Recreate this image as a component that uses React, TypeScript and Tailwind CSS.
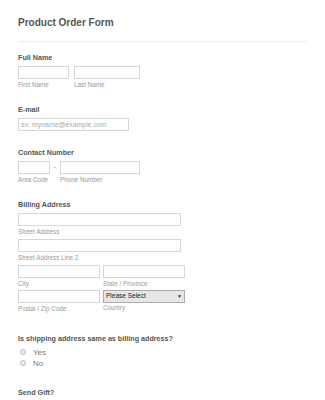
import React from 'react';

const font = { fontFamily: '"Liberation Sans", Arial, sans-serif' };

function Label({ children }: { children: React.ReactNode }) {
  return <div className="text-[7.2px] font-bold text-[#555] leading-[10px] mb-[3px]">{children}</div>;
}

function Sub({ children }: { children: React.ReactNode }) {
  return <div className="text-[6.3px] text-[#999] leading-[8px] mt-[2px]">{children}</div>;
}

function Box({ w }: { w: string }) {
  return <div className={`${w} h-[13px] border border-[#d7d7d7] bg-white`} />;
}

export default function App() {
  return (
    <div className="w-[325px] h-[400px] bg-white overflow-hidden" style={font}>
      <div className="px-[18px] pt-[16px]">
        <h1 className="text-[10px] font-bold text-[#555] leading-[13px]">Product Order Form</h1>
        <div className="mt-[12px] border-t border-[#ececec]" />

        {/* Full name */}
        <div className="mt-[11px]">
          <Label>Full Name</Label>
          <div className="flex gap-[5px]">
            <div><Box w="w-[51px]" /><Sub>First Name</Sub></div>
            <div><Box w="w-[66px]" /><Sub>Last Name</Sub></div>
          </div>
        </div>

        {/* Email */}
        <div className="mt-[16px]">
          <Label>E-mail</Label>
          <div className="w-[111px] h-[13px] border border-[#d7d7d7] text-[6.9px] text-[#aaa] leading-[11px] pl-[2px]">
            ex: myname@example.com
          </div>
        </div>

        {/* Contact */}
        <div className="mt-[17px]">
          <Label>Contact Number</Label>
          <div className="flex items-start">
            <div><Box w="w-[32px]" /><Sub>Area Code</Sub></div>
            <div className="w-[10px] text-center text-[7px] text-[#999] leading-[12px]">-</div>
            <div><Box w="w-[80px]" /><Sub>Phone Number</Sub></div>
          </div>
        </div>

        {/* Billing */}
        <div className="mt-[16px]">
          <Label>Billing Address</Label>
          <Box w="w-[163px]" />
          <Sub>Street Address</Sub>
          <div className="mt-[3px]"><Box w="w-[163px]" /></div>
          <Sub>Street Address Line 2</Sub>
          <div className="mt-[3px] flex gap-[3px]">
            <div><Box w="w-[82px]" /><Sub>City</Sub></div>
            <div><Box w="w-[82px]" /><Sub>State / Province</Sub></div>
          </div>
          <div className="mt-[2px] flex gap-[3px]">
            <div><Box w="w-[82px]" /><Sub>Postal / Zip Code</Sub></div>
            <div>
              <div className="w-[82px] h-[13px] border border-[#aaa] bg-[#e6e6e6] flex items-center justify-between px-[2px]">
                <span className="text-[6.5px] text-[#222] leading-none">Please Select</span>
                <span className="text-[5px] text-[#333] leading-none">▼</span>
              </div>
              <div className="text-[6.3px] text-[#999] leading-[8px] mt-[1px]">Country</div>
            </div>
          </div>
        </div>

        {/* Shipping question */}
        <div className="mt-[21px]">
          <Label>Is shipping address same as billing address?</Label>
          <div className="flex flex-col gap-[1px] pl-[2px] mt-[1px]">
            {['Yes', 'No'].map((o) => (
              <div key={o} className="flex items-center gap-[7px] h-[10px]">
                <span className="w-[6px] h-[6px] rounded-full border border-[#bbb] bg-[#eee]" />
                <span className="text-[8px] text-[#777] leading-[9px]">{o}</span>
              </div>
            ))}
          </div>
        </div>

        <div className="mt-[20px]">
          <Label>Send Gift?</Label>
        </div>
      </div>
    </div>
  );
}
